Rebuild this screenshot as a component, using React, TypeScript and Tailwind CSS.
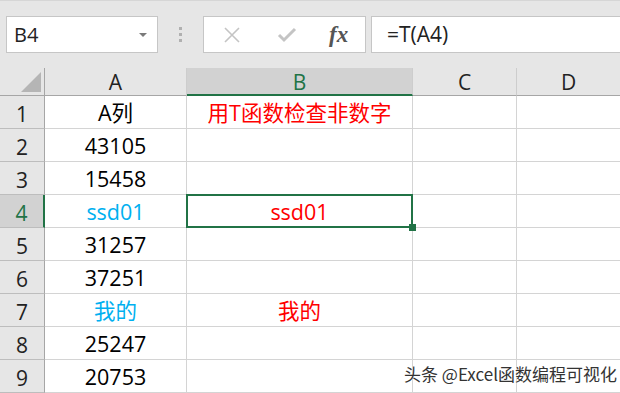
import React from 'react';

const FONT = { fontFamily: '"Open Sans", "Noto Sans CJK SC", sans-serif' };

const rows = [
  { a: 'A列', b: '用T函数检查非数字', aColor: 'text-black' },
  { a: '43105', b: '', aColor: 'text-black' },
  { a: '15458', b: '', aColor: 'text-black' },
  { a: 'ssd01', b: 'ssd01', aColor: 'text-[#00b0f0]' },
  { a: '31257', b: '', aColor: 'text-black' },
  { a: '37251', b: '', aColor: 'text-black' },
  { a: '我的', b: '我的', aColor: 'text-[#00b0f0]' },
  { a: '25247', b: '', aColor: 'text-black' },
  { a: '20753', b: '', aColor: 'text-black' },
];

export default function App() {
  return (
    <div className="relative w-[620px] h-[393px] overflow-hidden bg-white" style={FONT}>
      {/* 编辑栏 */}
      <div className="h-[68px] bg-[#e6e6e6] border-t border-[#d6d6d6] flex items-start pt-[15px]">
        <div className="ml-[6px] w-[152px] h-[37px] bg-white border border-[#c6c6c6] flex items-center justify-between pl-[7px] pr-[10px]">
          <span className="text-[20px] text-[#222] leading-none">B4</span>
          <span className="w-0 h-0 border-l-[4px] border-r-[4px] border-t-[4px] border-l-transparent border-r-transparent border-t-[#7a7a7a]" />
        </div>
        <div className="w-[45px] h-[37px] flex flex-col items-center justify-center gap-[3px]">
          <span className="w-[3px] h-[3px] bg-[#b0b0b0]" />
          <span className="w-[3px] h-[3px] bg-[#b0b0b0]" />
          <span className="w-[3px] h-[3px] bg-[#b0b0b0]" />
        </div>
        <div className="w-[163px] h-[37px] bg-white border border-[#c6c6c6] flex items-center">
          <svg className="ml-[19px]" width="18" height="18" viewBox="0 0 18 18">
            <path d="M2 2 L16 16 M16 2 L2 16" stroke="#c4c4c4" strokeWidth="1.6" fill="none" />
          </svg>
          <svg className="ml-[36px]" width="20" height="16" viewBox="0 0 20 16">
            <path d="M2 8 L7 13 L18 2" stroke="#c4c4c4" strokeWidth="3" fill="none" />
          </svg>
          <span className="ml-[32px] text-[23px] italic font-bold text-[#555] leading-none" style={{ fontFamily: '"Liberation Serif", serif' }}>
            fx
          </span>
        </div>
        <div className="ml-[5px] flex-1 h-[37px] bg-white border border-[#c6c6c6] border-r-0 flex items-center pl-[15px]">
          <span className="text-[21px] text-[#222] leading-none">=T(A4)</span>
        </div>
      </div>

      {/* 表格 */}
      <div className="grid grid-cols-[45px_142px_226px_104px_104px] auto-rows-[33px] grid-rows-[28px]">
        {/* 列标题 */}
        <div className="bg-[#e6e6e6] border-r border-b border-[#a6a6a6] flex items-end justify-end pr-[3px] pb-[3px]">
          <svg width="20" height="20" viewBox="0 0 20 20">
            <path d="M20 0 L20 20 L0 20 Z" fill="#b5b5b5" />
          </svg>
        </div>
        <div className="bg-[#e6e6e6] border-r border-[#cdcdcd] border-b border-b-[#a6a6a6] flex items-center justify-center text-[21px] text-[#222] pt-[2px]">A</div>
        <div className="bg-[#d2d2d2] border-r border-[#cdcdcd] border-b-2 border-b-[#217346] flex items-center justify-center text-[21px] text-[#217346] pt-[3px]">B</div>
        <div className="bg-[#e6e6e6] border-r border-[#cdcdcd] border-b border-b-[#a6a6a6] flex items-center justify-center text-[21px] text-[#222] pt-[2px]">C</div>
        <div className="bg-[#e6e6e6] border-r border-[#cdcdcd] border-b border-b-[#a6a6a6] flex items-center justify-center text-[21px] text-[#222] pt-[2px]">D</div>

        {rows.map((r, i) => {
          const selected = i === 3;
          return (
            <React.Fragment key={i}>
              <div
                className={
                  selected
                    ? 'bg-[#d2d2d2] border-r-2 border-r-[#217346] border-b border-b-[#bdbdbd] flex items-center justify-center text-[21px] text-[#217346] leading-[32px] pt-[3px]'
                    : 'bg-[#e6e6e6] border-r border-r-[#a6a6a6] border-b border-b-[#bdbdbd] flex items-center justify-center text-[21px] text-[#222] leading-[32px] pt-[3px]'
                }
              >
                {i + 1}
              </div>
              <div className={`border-r border-b border-[#d4d4d4] flex items-center justify-center text-[21.5px] leading-[32px] pt-[1px] ${r.aColor}`}>
                {r.a}
              </div>
              <div className="relative border-r border-b border-[#d4d4d4] flex items-center justify-center text-[21.5px] leading-[32px] pt-[1px] text-[#ff0000]">
                {r.b}
                {selected && (
                  <>
                    <div className="absolute -left-[1px] -top-[1px] right-[-1px] bottom-[-1px] border-2 border-[#217346]" />
                    <div className="absolute right-[-4px] bottom-[-4px] w-[7px] h-[7px] bg-[#217346] z-10" />
                  </>
                )}
              </div>
              <div className="border-r border-b border-[#d4d4d4]" />
              <div className="border-r border-b border-[#d4d4d4]" />
            </React.Fragment>
          );
        })}
      </div>

      {/* 水印 */}
      <div
        className="absolute left-[404px] top-[361px] text-[17px] text-[#333] whitespace-nowrap [text-shadow:0_0_2px_#fff,0_0_1px_#fff]"
        style={{ fontFamily: '"Noto Sans CJK SC", sans-serif' }}
      >
        头条 @Excel函数编程可视化
      </div>
    </div>
  );
}
